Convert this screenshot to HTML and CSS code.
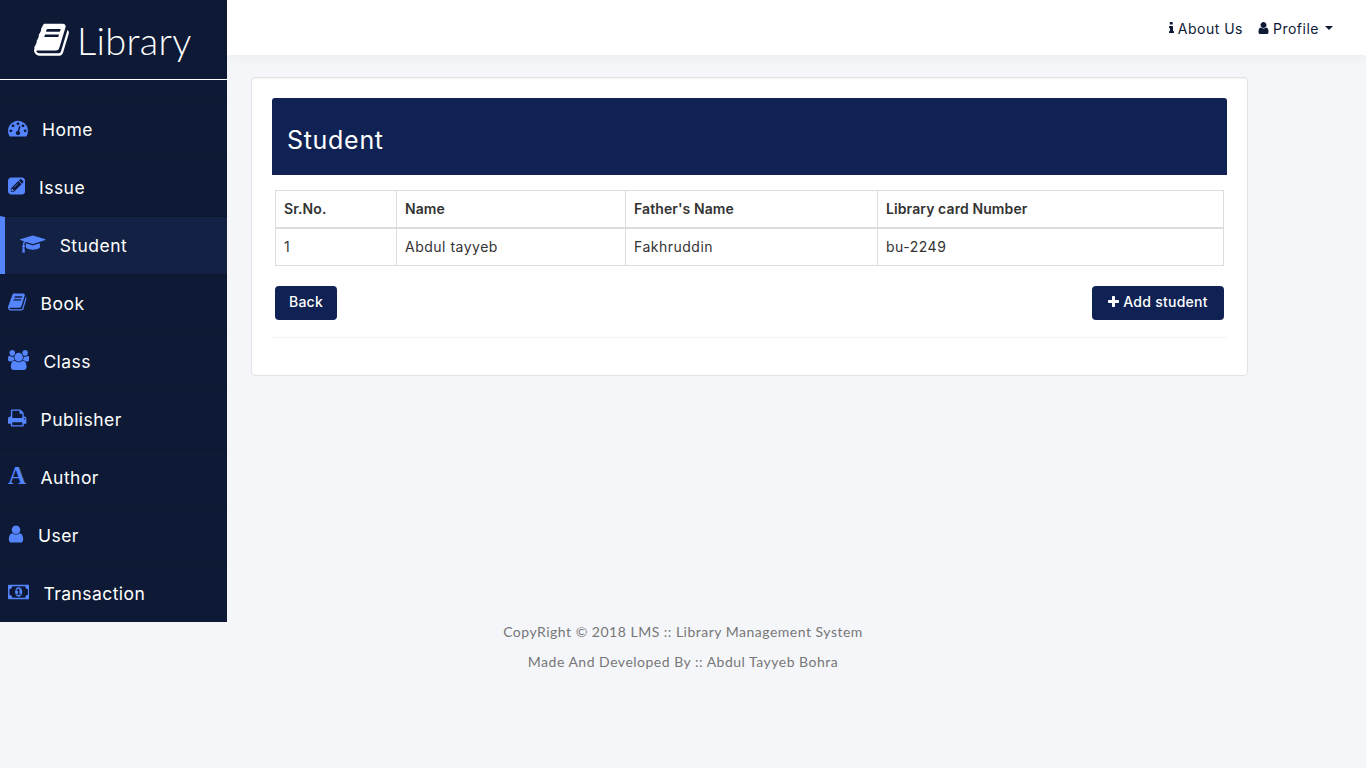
FILE: index.html
```html
<!DOCTYPE html>
<html lang="en">
<head>
<meta charset="utf-8">
<title>Library - Student</title>
<link rel="stylesheet" href="styles.css">
</head>
<body>
<svg class="defs" aria-hidden="true">
  <symbol id="book" viewBox="64 0 1664 1792"><path d="M1703 478q40 57 18 129l-275 906q-19 64-76.5 107.5t-122.5 43.5h-923q-77 0-148.5-53.5t-99.5-131.5q-24-67-2-127 0-4 3-27t4-37q1-8-3-21.5t-3-19.5q2-11 8-21t16.5-23.5 16.5-23.5q23-38 45-91.5t30-91.5q3-10 .5-30t-.5-28q3-11 17-28t17-23q21-36 42-92t25-90q1-9-2.5-32t.5-28q4-13 22-30.5t22-22.5q19-26 42.5-84.5t27.5-96.5q1-8-3-25.5t-2-26.5q2-8 9-18t18-23 17-21q8-12 16.5-30.5t15-35 16-36 19.5-32 26.5-23.5 36-11.5 47.5 5.5l-1 3q38-9 51-9h761q74 0 114 56t18 130l-274 906q-36 119-71.5 153.5t-128.5 34.5h-869q-27 0-38 15-11 16-1 43 24 70 144 70h923q29 0 56-15.5t35-41.5l300-987q7-22 5-57 38 15 59 43zm-1064 2q-4 13 2 22.5t20 9.5h608q13 0 25.5-9.5t16.5-22.5l21-64q4-13-2-22.5t-20-9.5h-608q-13 0-25.5 9.5t-16.5 22.5zm-83 256q-4 13 2 22.5t20 9.5h608q13 0 25.5-9.5t16.5-22.5l21-64q4-13-2-22.5t-20-9.5h-608q-13 0-25.5 9.5t-16.5 22.5z"/></symbol>
  <symbol id="gauge" viewBox="0 0 1792 1792"><path d="M384 1152q0-53-37.5-90.5t-90.5-37.5-90.5 37.5-37.5 90.5 37.5 90.5 90.5 37.5 90.5-37.5 37.5-90.5zm192-448q0-53-37.5-90.5t-90.5-37.5-90.5 37.5-37.5 90.5 37.5 90.5 90.5 37.5 90.5-37.5 37.5-90.5zm428 481l101-382q6-26-7.5-48.5t-38.5-29.5-48 6.5-30 39.5l-101 382q-60 5-107 43.5t-63 98.5q-20 77 20 146t117 89 146-20 89-117q16-60-6-117t-72-91zm660-33q0-53-37.5-90.5t-90.5-37.5-90.5 37.5-37.5 90.5 37.5 90.5 90.5 37.5 90.5-37.5 37.5-90.5zm-640-640q0-53-37.5-90.5t-90.5-37.5-90.5 37.5-37.5 90.5 37.5 90.5 90.5 37.5 90.5-37.5 37.5-90.5zm448 192q0-53-37.5-90.5t-90.5-37.5-90.5 37.5-37.5 90.5 37.5 90.5 90.5 37.5 90.5-37.5 37.5-90.5zm320 448q0 261-141 483-19 29-54 29h-1402q-35 0-54-29-141-221-141-483 0-182 71-348t191-286 286-191 348-71 348 71 286 191 191 286 71 348z"/></symbol>
  <symbol id="edit" viewBox="0 0 1536 1792"><path fill-rule="evenodd" d="M288 128h960q119 0 203.500 84.500t84.500 203.500v960q0 119-84.500 203.500t-203.500 84.500h-960q-119 0-203.500-84.500t-84.500-203.500v-960q0-119 84.500-203.500t203.500-84.500zM256 1408h288l672-672-288-288-672 672zM980 396l288 288 92-92q28-28 28-68t-28-68l-152-152q-28-28-68-28t-68 28zM356 1152h92v96h96v56l-44 44-188-0v-152zM900 640q17-17 33-1t-1 33l-350 350q-17 17-33 1t1-33z"/></symbol>
  <symbol id="cap" viewBox="0 0 2304 1792"><path d="M1774 836l18 316q4 69-82 128t-235 93.5-323 34.500-323-34.500-235-93.500-82-128l18-316 574 181q22 7 48 7t48-7zm530-324q0 23-22 31l-1120 352q-4 1-10 1t-10-1l-652-206q-43 34-71 111.500t-34 178.500q63 36 63 109 0 69-58 107l58 433q2 14-8 25-9 11-24 11h-192q-15 0-24-11-10-11-8-25l58-433q-58-38-58-107 0-73 65-111 11-207 98-330l-333-104q-22-8-22-31t22-31l1120-352q4-1 10-1t10 1l1120 352q22 8 22 31z"/></symbol>
  <symbol id="users" viewBox="64 0 1920 1792"><path d="M657 896q-162 5-265 128h-134q-82 0-138-40.500t-56-118.500q0-353 124-353 6 0 43.500 21t97.500 42.500 119 21.500q67 0 133-23-5 37-5 66 0 143 81 256zm1071 637q0 120-73 189.500t-194 69.500h-874q-121 0-194-69.500t-73-189.500q0-53 3.500-103.500t14-109 26.500-108.500 43-97.500 62-81 85.500-53.500 111.500-20q10 0 43 21.500t73 48 107 48 135 21.500 135-21.500 107-48 73-48 43-21.500q61 0 111.500 20t85.500 53.500 62 81 43 97.500 26.500 108.500 14 109 3.500 103.500zm-1024-1277q0 106-75 181t-181 75-181-75-75-181 75-181 181-75 181 75 75 181zm704 384q0 159-112.500 271.500t-271.500 112.500-271.500-112.500-112.500-271.500 112.500-271.500 271.500-112.500 271.500 112.500 112.500 271.500zm576 225q0 78-56 118.500t-138 40.500h-134q-103-123-265-128 81-113 81-256 0-29-5-66 66 23 133 23 59 0 119-21.500t97.500-42.500 43.500-21q124 0 124 353zm-128-609q0 106-75 181t-181 75-181-75-75-181 75-181 181-75 181 75 75 181z"/></symbol>
  <symbol id="print" viewBox="64 0 1664 1792"><path d="M448 1536h896v-256h-896v256zm0-640h896v-384h-160q-40 0-68-28t-28-68v-160h-640v640zm1152 64q0-26-19-45t-45-19-45 19-19 45 19 45 45 19 45-19 19-45zm128 0v416q0 13-9.500 22.500t-22.500 9.500h-224v160q0 40-28 68t-68 28h-960q-40 0-68-28t-28-68v-160h-224q-13 0-22.500-9.500t-9.500-22.500v-416q0-79 56.500-135.500t135.500-56.500h64v-544q0-40 28-68t68-28h672q40 0 88 20t76 48l152 152q28 28 48 76t20 88v256h64q79 0 135.500 56.500t56.500 135.500z"/></symbol>
  <symbol id="user" viewBox="256 0 1280 1792"><path d="M1536 1399q0 109-62.500 187t-150.500 78h-854q-88 0-150.500-78t-62.500-187q0-85 8.500-160.500t31.500-152 58.500-131 94-89 134.500-34.500q131 128 313 128t313-128q76 0 134.500 34.500t94 89 58.500 131 31.500 152 8.500 160.500zm-256-887q0 159-112.500 271.500t-271.500 112.500-271.500-112.500-112.500-271.500 112.500-271.500 271.500-112.500 271.500 112.500 112.500 271.500z"/></symbol>
  <symbol id="money" viewBox="0 0 1920 1792"><path fill-rule="evenodd" d="M64 256h1792q64 0 64 64v1152q0 64-64 64h-1792q-64 0-64-64v-1152q0-64 64-64zM384 384q0 106-75 181t-181 75v512q106 0 181 75t75 181h1152q0-106 75-181t181-75v-512q-106 0-181-75t-75-181zM960 480q150 0 235 126t85 290-85 290-235 126-235-126-85-290 85-290 235-126zM768 1152h384v-96h-128v-448h-114l-148 137 77 80 60-53v284h-131z"/></symbol>
  <symbol id="info" viewBox="0 0 640 1792"><path d="M160 128h256q64 0 64 64v192q0 64-64 64h-256q-64 0-64-64v-192q0-64 64-64zM64 640h384q64 0 64 64v576h64q64 0 64 64v128q0 64-64 64h-512q-64 0-64-64v-128q0-64 64-64h64v-384h-64q-64 0-64-64v-128q0-64 64-64z"/></symbol>
  <symbol id="plus" viewBox="0 0 1408 1792"><path d="M1408 736v192q0 40-28 68t-68 28h-416v416q0 40-28 68t-68 28h-192q-40 0-68-28t-28-68v-416h-416q-40 0-68-28t-28-68v-192q0-40 28-68t68-28h416v-416q0-40 28-68t68-28h192q40 0 68 28t28 68v416h416q40 0 68 28t28 68z"/></symbol>
</svg>
<div class="shell">
  <aside class="sidebar">
    <div class="brand"><svg class="brand-icon"><use href="#book"/></svg><span class="brand-name">Library</span></div>
    <nav class="menu">
      <a class="item"><svg class="w-gauge"><use href="#gauge"/></svg><span>Home</span></a>
      <a class="item"><svg class="w-edit"><use href="#edit"/></svg><span>Issue</span></a>
      <a class="item active"><svg class="w-cap"><use href="#cap"/></svg><span>Student</span></a>
      <a class="item"><svg class="w-book"><use href="#book"/></svg><span>Book</span></a>
      <a class="item"><svg class="w-users"><use href="#users"/></svg><span>Class</span></a>
      <a class="item"><svg class="w-book"><use href="#print"/></svg><span>Publisher</span></a>
      <a class="item"><b class="letter">A</b><span>Author</span></a>
      <a class="item"><svg class="w-user"><use href="#user"/></svg><span>User</span></a>
      <a class="item"><svg class="w-users"><use href="#money"/></svg><span>Transaction</span></a>
    </nav>
  </aside>
  <div class="main">
    <header class="topbar">
      <a class="toplink"><svg class="t-info"><use href="#info"/></svg><span>About Us</span></a>
      <a class="toplink profile"><svg class="t-user"><use href="#user"/></svg><span>Profile</span><i class="caret"></i></a>
    </header>
    <section class="well">
      <div class="panel">
        <h1 class="heading">Student</h1>
        <div class="panel-body">
          <table class="grid">
            <colgroup><col class="c1"><col class="c2"><col class="c3"><col></colgroup>
            <thead><tr><th>Sr.No.</th><th>Name</th><th>Father's Name</th><th>Library card Number</th></tr></thead>
            <tbody><tr><td>1</td><td>Abdul tayyeb</td><td>Fakhruddin</td><td>bu-2249</td></tr></tbody>
          </table>
          <div class="actions">
            <button class="btn back">Back</button>
            <button class="btn add"><svg class="t-plus"><use href="#plus"/></svg><span>Add student</span></button>
          </div>
        </div>
      </div>
    </section>
  </div>
</div>
<footer class="footer">
  <p class="line-one">CopyRight © 2018 LMS :: Library Management System</p>
  <p class="line-two">Made And Developed By :: Abdul Tayyeb Bohra</p>
</footer>
</body>
</html>
```

FILE: styles.css
```css
* { box-sizing: border-box; }
body { margin: 0; height: 768px; overflow: hidden; background: #f5f6fa; font-family: Inter, Roboto, sans-serif; font-size: 14px; color: #333; }
svg { fill: currentColor; flex: none; display: block; }
.defs { display: none; }
.shell { display: flex; height: 622px; }
.sidebar { width: 227px; flex: none; background: #0e1a35; }
.brand { height: 80px; padding: 0 0 0 34px; display: flex; align-items: flex-start; color: #fff; border-bottom: 1px solid #fff; }
.brand-icon { width: 35px; height: 37.500px; margin-top: 21px; }
.brand-name { font: 300 38px/44px Lato, sans-serif; margin: 18px 0 0 8px; letter-spacing: 0.3px; }
.menu { padding-top: 20px; }
.item { height: 58px; padding: 0 8px; display: flex; align-items: center; gap: 14px; color: #5584ff; border-top: 1px solid #0c172d; }
.item svg, .letter { height: 20px; margin-bottom: 4px; }
.item span { color: #fff; font-size: 17.500px; line-height: 24px; letter-spacing: 0.450px; }
.active { background: #132144; border-left: 5px solid #5584ff; padding-left: 15px; }
.w-gauge { width: 20px; }
.w-edit { width: 17.100px; }
.w-cap { width: 25.700px; }
.w-book { width: 18.600px; }
.w-users { width: 21.400px; }
.w-user { width: 16px; }
.letter { width: 18.600px; font: bold 25px/20px "Liberation Serif", serif; }
.main { flex: 1; }
.topbar { height: 55px; background: #fff; display: flex; justify-content: flex-end; align-items: center; padding: 1px 33px 0 0; gap: 15px; color: #0e1a35; box-shadow: 0 3px 12px rgba(0,0,0,.04); }
.toplink { display: flex; align-items: center; gap: 4px; letter-spacing: .5px; }
.t-info { width: 5px; height: 14px; }
.t-user { width: 11px; height: 14px; }
.caret { border: 4px solid transparent; border-top-color: currentColor; border-bottom: 0; margin-left: 2px; }
.well { margin: 22px 0 0 24px; width: 997px; height: 299px; border: 1px solid #e3e3e3; border-radius: 4px; background: #fff; padding: 20px; box-shadow: inset 0 1px 1px rgba(0,0,0,.05); }
.panel { height: 239px; border-radius: 4px; box-shadow: 0 1px 1px rgba(0,0,0,.05); }
.heading { margin: 0; height: 77px; background: #102254; color: #fff; border-radius: 3px 3px 0 0; padding: 26px 15px 0; font-weight: 400; font-size: 25px; line-height: 33px; letter-spacing: .7px; }
.panel-body { padding: 15px 3px; }
.grid { width: 949px; border-collapse: collapse; table-layout: fixed; }
.c1 { width: 121px; }
.c2 { width: 229px; }
.c3 { width: 252px; }
.grid th, .grid td { border: 1px solid #ddd; padding: 8px; height: 37px; line-height: 20px; text-align: left; letter-spacing: .5px; font-weight: 400; }
.grid th { border-bottom-width: 2px; font-weight: 600; letter-spacing: 0.1px; }
.actions { display: flex; justify-content: space-between; margin-top: 20px; }
.btn { height: 34px; border: 0; border-radius: 4px; background: #102254; color: #fff; font: 500 14px/20px Inter, sans-serif; display: flex; align-items: center; justify-content: center; gap: 4px; padding: 0 0 2px; letter-spacing: .25px; }
.back { width: 62px; }
.add { width: 132px; }
.t-plus { width: 11px; height: 14px; }
.footer { display: flex; flex-direction: column; align-items: center; color: #777; font: 400 14px/20px Lato, sans-serif; }
.footer p { margin: 0 0 10px; letter-spacing: .5px; }
```
